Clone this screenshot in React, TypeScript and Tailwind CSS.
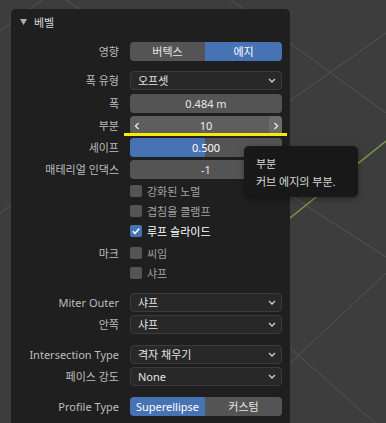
import type { ReactNode } from "react";

const labelCls = "pr-[11px] text-right text-[#bdbdbd]";

function Chevron() {
  return (
    <svg width="8" height="5" viewBox="0 0 8 5" className="shrink-0">
      <path d="M1 1l3 3 3-3" fill="none" stroke="#cfcfcf" strokeWidth="1.3" />
    </svg>
  );
}

function Row({ label, children, className = "" }: { label?: string; children: ReactNode; className?: string }) {
  return (
    <div className={`grid h-[19px] grid-cols-[119px_152px] items-center ${className}`}>
      <div className={labelCls}>{label}</div>
      {children}
    </div>
  );
}

function Dropdown({ value }: { value: string }) {
  return (
    <div className="flex h-full items-center justify-between rounded-[4px] border border-[#3b3b3b] bg-[#282828] pl-[7px] pr-[5px] text-[#e4e4e4]">
      <span>{value}</span>
      <Chevron />
    </div>
  );
}

function Field({ value }: { value: string }) {
  return (
    <div className="flex h-full items-center justify-center rounded-[4px] bg-[#545454] text-[#e6e6e6]">{value}</div>
  );
}

function Toggle({ left, right, active }: { left: string; right: string; active: "left" | "right" }) {
  return (
    <div className="flex h-full overflow-hidden rounded-[4px] text-[#e6e6e6]">
      <div className={`flex w-[75px] items-center justify-center ${active === "left" ? "bg-[#4772b3] text-white" : "bg-[#545454]"}`}>
        {left}
      </div>
      <div className={`flex flex-1 items-center justify-center ${active === "right" ? "bg-[#4772b3] text-white" : "bg-[#545454]"}`}>
        {right}
      </div>
    </div>
  );
}

function Check({ label, text, checked = false, className = "" }: { label?: string; text: string; checked?: boolean; className?: string }) {
  return (
    <div className={`grid h-[20px] grid-cols-[119px_152px] items-center ${className}`}>
      <div className={labelCls}>{label}</div>
      <div className="flex items-center gap-[5px]">
        <div className={`flex h-[12px] w-[12px] items-center justify-center rounded-[2px] ${checked ? "bg-[#4772b3]" : "bg-[#545454]"}`}>
          {checked && (
            <svg width="10" height="10" viewBox="0 0 10 10">
              <path d="M1.8 5.2l2.2 2.2 4.3-5" fill="none" stroke="#fff" strokeWidth="1.6" />
            </svg>
          )}
        </div>
        <span className={checked ? "text-white" : "text-[#a3a3a3]"}>{text}</span>
      </div>
    </div>
  );
}

function Backdrop() {
  return (
    <svg className="absolute inset-0" width="386" height="423" viewBox="0 0 386 423">
      <g stroke="#555555" strokeWidth="1" fill="none">
        <path d="M0 31L42 0" />
        <path d="M66 0L82 10" />
        <path d="M231 0L386 113" />
        <path d="M270 115L386 33" />
        <path d="M270 182L386 257" />
        <path d="M270 330L375 423" />
        <path d="M270 382L386 273" />
        <path d="M0 213L14 203" />
      </g>
      <path d="M270 234L386 141" stroke="#7a9c3f" strokeWidth="1.5" />
    </svg>
  );
}

export default function App() {
  return (
    <div className="relative h-[423px] w-[386px] overflow-hidden bg-[#3d3d3d] font-['Noto_Sans','Noto_Sans_CJK_KR',sans-serif] text-[11px] leading-none">
      <Backdrop />

      <div className="relative ml-[11px] mt-[9px] w-[279px] rounded-t-[5px] bg-[#1f1f1f] pb-[20px]">
        <div className="flex h-[26px] items-center gap-[7px] pl-[9px] text-[#d4d4d4]">
          <svg width="7" height="6" viewBox="0 0 7 6">
            <path d="M0 0h7L3.5 6z" fill="#b0b0b0" />
          </svg>
          <span>베벨</span>
        </div>

        <Row label="영향" className="mt-[7px]">
          <Toggle left="버텍스" right="에지" active="right" />
        </Row>

        <Row label="폭 유형" className="mt-[10px]">
          <Dropdown value="오프셋" />
        </Row>
        <Row label="폭" className="mt-[4px]">
          <Field value="0.484 m" />
        </Row>
        <Row label="부분" className="mt-[3px]">
          <div className="flex h-full items-center overflow-hidden rounded-[4px] bg-[#5e5e5e] text-[#eeeeee]">
            <div className="flex w-[13px] items-center justify-center">
              <svg width="6" height="8" viewBox="0 0 6 8">
                <path d="M4.5 1L1.5 4l3 3" fill="none" stroke="#e6e6e6" strokeWidth="1.4" />
              </svg>
            </div>
            <div className="flex-1 text-center">10</div>
            <div className="flex h-full w-[13px] items-center justify-center bg-[#6b6b6b]">
              <svg width="6" height="8" viewBox="0 0 6 8">
                <path d="M1.5 1l3 3-3 3" fill="none" stroke="#e6e6e6" strokeWidth="1.4" />
              </svg>
            </div>
          </div>
        </Row>
        <Row label="세이프" className="mt-[3px]">
          <div className="relative flex h-full items-center justify-center overflow-hidden rounded-[4px] bg-[#545454] text-white">
            <div className="absolute inset-y-0 left-0 w-[75px] bg-[#4772b3]" />
            <span className="relative">0.500</span>
          </div>
        </Row>
        <Row label="매테리얼 인댁스" className="mt-[3px]">
          <Field value="-1" />
        </Row>

        <Check text="강화된 노멀" className="mt-[2px]" />
        <Check text="겹침을 클램프" />
        <Check text="루프 슬라이드" checked />
        <Check label="마크" text="씨임" className="mt-[2px]" />
        <Check text="샤프" />

        <Row label="Miter Outer" className="mt-[10px]">
          <Dropdown value="샤프" />
        </Row>
        <Row label="안쪽" className="mt-[3px]">
          <Dropdown value="샤프" />
        </Row>
        <Row label="Intersection Type" className="mt-[11px]">
          <Dropdown value="격자 채우기" />
        </Row>
        <Row label="페이스 강도" className="mt-[3px]">
          <Dropdown value="None" />
        </Row>
        <Row label="Profile Type" className="mt-[11px]">
          <Toggle left="Superellipse" right="커스텀" active="left" />
        </Row>
      </div>

      {/* annotation highlight */}
      <div className="absolute left-[124px] top-[133px] h-[3px] w-[163px] bg-[#f6ec0a]" />

      {/* tooltip */}
      <div className="absolute left-[244px] top-[146px] h-[51px] w-[114px] rounded-[5px] bg-[#181818] pl-[12px] pt-[9px] leading-[18px] text-[#dadada] shadow-[0_2px_6px_rgba(0,0,0,0.35)]">
        <div>부분</div>
        <div>커브 에지의 부분.</div>
      </div>
    </div>
  );
}
